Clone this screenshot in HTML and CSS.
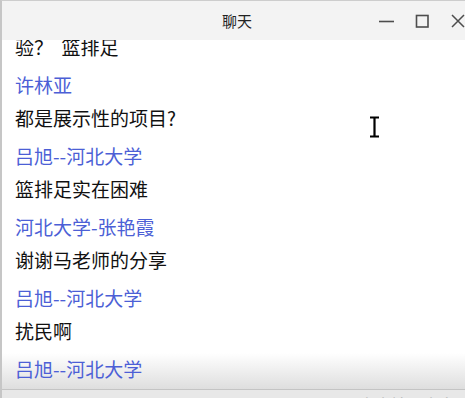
FILE: index.html
```html
<!DOCTYPE html>
<html lang="zh-CN">
<head>
    <meta charset="UTF-8">
    <title>聊天</title>
    <link rel="stylesheet" href="styles.css">
</head>
<body>
    <div class="window">
        <div class="titlebar">
            <span class="title">聊天</span>
            <div class="controls">
                <svg class="ctl" width="16" height="16" viewBox="0 0 16 16"><path d="M1 8.5h15" stroke="#4d4d4d" stroke-width="1.6"/></svg>
                <svg class="ctl" width="16" height="16" viewBox="0 0 16 16"><rect x="2.5" y="2.5" width="11.5" height="11.5" fill="none" stroke="#4d4d4d" stroke-width="1.6"/></svg>
                <svg class="ctl" width="16" height="16" viewBox="0 0 16 16"><path d="M2 2l12 12M14 2L2 14" stroke="#4d4d4d" stroke-width="1.5"/></svg>
            </div>
        </div>

        <div class="chat">
            <div class="chat-list">
                <div class="item">
                    <div class="text">验？&nbsp;&nbsp;篮排足</div>
                </div>
                <div class="item">
                    <div class="name">许林亚</div>
                    <div class="text">都是展示性的项目?</div>
                </div>
                <div class="item">
                    <div class="name">吕旭--河北大学</div>
                    <div class="text">篮排足实在困难</div>
                </div>
                <div class="item">
                    <div class="name">河北大学-张艳霞</div>
                    <div class="text">谢谢马老师的分享</div>
                </div>
                <div class="item">
                    <div class="name">吕旭--河北大学</div>
                    <div class="text">扰民啊</div>
                </div>
                <div class="item">
                    <div class="name">吕旭--河北大学</div>
                </div>
            </div>
            <!-- text cursor hovering over the list -->
            <svg class="ibeam" width="14" height="22" viewBox="0 0 14 22">
                <path d="M2 1.5h9M6.5 1.5v19M2 20.5h9" stroke="#000" stroke-width="2.2"/>
            </svg>
        </div>

        <div class="footer">
            <span class="hint">点击输入内容</span>
        </div>
    </div>
</body>
</html>
```

FILE: styles.css
```css
html, body {
    margin: 0;
    padding: 0;
    height: 100%;
}
body {
    font-family: "Noto Sans CJK SC", "Microsoft YaHei", sans-serif;
    background-color: #ffffff;
    overflow: hidden;
}
.window {
    display: flex;
    flex-direction: column;
    height: 398px;
    border-left: 2px solid #c6c6c6;
    border-top: 1px solid #cdcdcd;
    box-sizing: border-box;
}
.titlebar {
    position: relative;
    z-index: 1;
    height: 39px;
    flex-shrink: 0;
    background-color: #f3f3f3;
    display: flex;
    align-items: center;
    justify-content: center;
}
.title {
    font-size: 15px;
    color: #222;
    margin-left: 7px;
}
.controls {
    position: absolute;
    right: -1px;
    top: 12px;
    display: flex;
    gap: 20px;
}
.chat {
    position: relative;
    flex: 1;
    overflow: hidden;
    background: linear-gradient(to bottom, #ffffff calc(100% - 36px), #dedede);
}
.chat-list {
    margin-top: -10.5px;
    padding-left: 13px;
    display: flex;
    flex-direction: column;
    gap: 5px;
}
.name, .text {
    font-size: 19px;
    line-height: 33px;
    height: 33px;
    white-space: nowrap;
}
.name {
    color: #4c5fd6;
}
.text {
    color: #111;
}
.ibeam {
    position: absolute;
    left: 366px;
    top: 76px;
}
.footer {
    height: 8px;
    flex-shrink: 0;
    border-top: 1px solid #c4c4c4;
    background-color: #e8e8e8;
    overflow: hidden;
    text-align: right;
    padding-right: 10px;
}
.hint {
    display: block;
    font-size: 16px;
    line-height: 20px;
    margin-top: 4px;
    color: #b5b5b5;
}
```
